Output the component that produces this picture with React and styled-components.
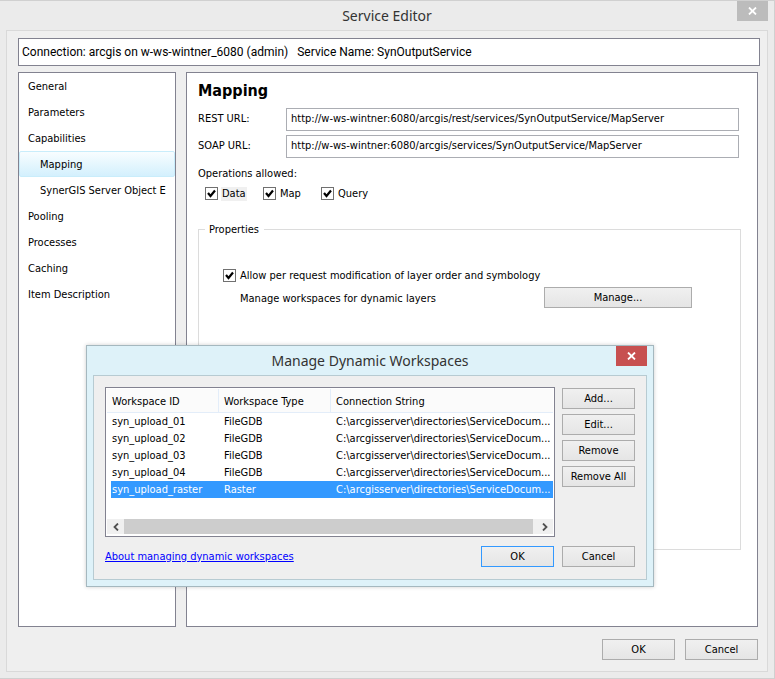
import { useState } from "react";
import styled, { createGlobalStyle, css } from "styled-components";

const GlobalStyle = createGlobalStyle`
  * {
    box-sizing: border-box;
  }

  body {
    margin: 0;
    background-color: #ebebeb;
    color: #000000;
    font-family: "DejaVu Sans Condensed", "DejaVu Sans", sans-serif;
    font-size: 11px;
    line-height: 16px;
  }

  button,
  input {
    font: inherit;
    color: inherit;
  }
`;

const Window = styled.div`
  position: relative;
  display: flex;
  flex-direction: column;
  min-height: 100vh;
  padding: 0 6px;
  border: 1px solid #d0d0d0;
  border-left: 0;
  background-color: #ebebeb;
`;

const TitleBar = styled.header`
  display: flex;
  align-items: center;
  justify-content: center;
  height: 29px;
  color: #333333;
`;

const Title = styled.h1`
  margin: 0;
  font-family: "Noto Sans", "Open Sans", sans-serif;
  font-size: 14px;
  font-weight: 400;
  line-height: 20px;
`;

const CloseButton = styled.button`
  position: absolute;
  top: 0;
  right: 6px;
  display: flex;
  align-items: center;
  justify-content: center;
  width: 31px;
  height: 20px;
  padding: 0;
  border: 0;
  background-color: ${({ $danger }) => ($danger ? "#c75050" : "#bcbcbc")};
`;

const Frame = styled.div`
  flex: 1;
  display: flex;
  flex-direction: column;
  gap: 6px;
  margin-bottom: 6px;
  padding: 7px 9px 11px 11px;
  border: 1px solid #d9d9d9;
  background-color: #efefef;
`;

const ConnectionBar = styled.div`
  display: flex;
  align-items: center;
  gap: 9px;
  height: 28px;
  margin-right: -2px;
  padding: 0 3px;
  border: 1px solid #828290;
  background-color: #ffffff;
  font-family: Roboto, "Noto Sans", sans-serif;
  font-size: 12px;
  white-space: nowrap;
`;

const Columns = styled.div`
  flex: 1;
  display: flex;
  gap: 10px;
`;

const Sidebar = styled.nav`
  width: 158px;
  overflow: hidden;
  border: 1px solid #828290;
  background-color: #ffffff;
`;

const NavItem = styled.a`
  display: block;
  height: 26px;
  padding: 0 9px;
  padding-left: ${({ $nested }) => ($nested ? "20px" : "8px")};
  border: 1px solid transparent;
  border-radius: 2px;
  color: #000000;
  line-height: 26px;
  text-decoration: none;
  white-space: nowrap;

  ${({ $active }) =>
    $active &&
    css`
      border-color: #c9edfb;
      background: linear-gradient(#f8fdff, #d3f0fd);
    `}
`;

const Panel = styled.main`
  flex: 1;
  padding: 8px 16px 75px 11px;
  border: 1px solid #828290;
  background-color: #ffffff;
`;

const Heading = styled.h2`
  margin: 0 0 7px;
  font-size: 16px;
  font-weight: 700;
  line-height: 20px;
`;

const UrlRow = styled.div`
  display: flex;
  align-items: center;
  margin: 0 2px 4px 0;

  label {
    width: 88px;
    padding-bottom: 2px;
  }

  input {
    flex: 1;
    min-width: 0;
    height: 23px;
    padding: 0 4px 2px;
    border: 1px solid #abadb3;
    background-color: #ffffff;
  }
`;

const Operations = styled.div`
  padding-top: 4px;

  p {
    margin: 0 0 3px;
  }
`;

const OperationList = styled.div`
  display: flex;
  padding-left: 7px;

  label {
    min-width: 58px;
  }
`;

const CheckLabel = styled.label`
  display: flex;
  align-items: center;
  gap: 3px;

  .text {
    margin-top: 2px;
    padding: 0 1px;
    line-height: 14px;
  }

  .text.focused {
    background-color: #f0f0f0;
  }
`;

const CheckBox = styled.span`
  display: grid;

  input {
    grid-area: 1 / 1;
    appearance: none;
    width: 13px;
    height: 13px;
    margin: 0;
    border: 1px solid #707070;
    background-color: #ffffff;
  }

  svg {
    grid-area: 1 / 1;
    pointer-events: none;
  }

  input:not(:checked) + svg {
    visibility: hidden;
  }
`;

const Properties = styled.fieldset`
  min-height: 330px;
  margin: 19px 0 0;
  padding: 29px 48px 0 24px;
  border: 1px solid #dcdcdc;

  legend {
    margin-left: -18px;
    padding: 2px 5px 0 4px;
  }
`;

const ManageRow = styled.div`
  display: flex;
  align-items: center;
  justify-content: space-between;
  margin-top: 4px;
  padding-left: 17px;

  span {
    padding-top: 2px;
  }
`;

const Button = styled.button`
  width: ${({ $wide }) => ($wide ? "148px" : "73px")};
  height: 21px;
  padding: 0;
  border: 1px solid ${({ $default }) => ($default ? "#3399ff" : "#acacac")};
  background: linear-gradient(#f0f0f0, #e5e5e5);
  line-height: 19px;
  white-space: nowrap;
`;

const Footer = styled.footer`
  display: flex;
  align-items: center;
  justify-content: flex-end;
  gap: ${({ $tight }) => ($tight ? "8px" : "10px")};
  padding-top: ${({ $tight }) => ($tight ? "3px" : "6px")};

  a {
    margin-right: auto;
    color: #0000ff;
  }
`;

const Dialog = styled.section`
  position: absolute;
  top: 344px;
  left: 86px;
  width: 568px;
  padding: 0 6px 6px;
  border: 1px solid #a5b8bf;
  background-color: #def2f9;
  box-shadow: 0 0 4px rgba(0, 0, 0, 0.2);
`;

const DialogFrame = styled.div`
  display: flex;
  flex-direction: column;
  gap: 6px;
  padding: 11px 11px 12px;
  border: 1px solid #b7cbd2;
  background-color: #efefef;
`;

const DialogBody = styled.div`
  display: flex;
  gap: 7px;
`;

const ButtonStack = styled.div`
  display: flex;
  flex-direction: column;
  gap: 5px;
  padding-top: 1px;
`;

const ListBox = styled.div`
  flex: 1;
  min-width: 0;
  display: flex;
  flex-direction: column;
  justify-content: space-between;
  height: 150px;
  padding: 1px 1px 2px;
  border: 1px solid #828290;
  background-color: #ffffff;
`;

const Table = styled.table`
  width: 100%;
  border-spacing: 0;
  table-layout: fixed;

  th,
  td {
    overflow: hidden;
    padding: 1px 0 0 5px;
    text-align: left;
    white-space: nowrap;
  }

  th {
    height: 24px;
    padding-top: 2px;
    border-right: 1px solid #e3edf9;
    border-bottom: 1px solid #e3edf9;
    background-color: #fbfbfb;
    font-weight: 400;
  }

  th:last-child {
    border-right: 0;
  }

  th:not(:last-child) {
    width: 112px;
  }

  td {
    height: 17px;
    line-height: 16px;
  }

  td:first-child {
    padding-left: 1px;
    border-left: 4px solid #ffffff;
  }
`;

const Row = styled.tr`
  ${({ $selected }) =>
    $selected &&
    css`
      background-color: #3399ff;
      color: #ffffff;
    `}
`;

const ScrollBar = styled.div`
  display: flex;
  height: 15px;
  background-color: #f0f0f0;

  button {
    display: flex;
    align-items: center;
    justify-content: center;
    width: 17px;
    padding: 0;
    border: 0;
    background-color: #f0f0f0;
  }

  .thumb {
    flex: 1;
    margin-right: 3px;
    background-color: #cdcdcd;
  }
`;

const navItems = [
  { label: "General" },
  { label: "Parameters" },
  { label: "Capabilities" },
  { label: "Mapping", nested: true },
  { label: "SynerGIS Server Object E", nested: true },
  { label: "Pooling" },
  { label: "Processes" },
  { label: "Caching" },
  { label: "Item Description" },
];

const connection = "C:\\arcgisserver\\directories\\ServiceDocum...";

const workspaces = [
  { id: "syn_upload_01", type: "FileGDB" },
  { id: "syn_upload_02", type: "FileGDB" },
  { id: "syn_upload_03", type: "FileGDB" },
  { id: "syn_upload_04", type: "FileGDB" },
  { id: "syn_upload_raster", type: "Raster" },
];

const CloseIcon = () => (
  <svg width="9" height="8" viewBox="0 0 9 8" aria-hidden="true">
    <path d="M1 0.5 8 7.5M8 0.5 1 7.5" stroke="#ffffff" strokeWidth="1.8" />
  </svg>
);

const Chevron = ({ right }) => (
  <svg width="6" height="8" viewBox="0 0 6 8" aria-hidden="true">
    <path
      d={right ? "M1 0.5 4.5 4 1 7.5" : "M5 0.5 1.5 4 5 7.5"}
      fill="none"
      stroke="#505050"
      strokeWidth="1.8"
    />
  </svg>
);

const Check = ({ label, focused }) => (
  <CheckLabel>
    <CheckBox>
      <input type="checkbox" defaultChecked />
      <svg width="13" height="13" viewBox="0 0 13 13" aria-hidden="true">
        <path
          d="M3 6 5.5 9 10 3.5"
          fill="none"
          stroke="#000000"
          strokeWidth="2.2"
        />
      </svg>
    </CheckBox>
    <span className={focused ? "text focused" : "text"}>{label}</span>
  </CheckLabel>
);

const ManageDialog = () => {
  const [selected, setSelected] = useState("syn_upload_raster");

  return (
    <Dialog role="dialog" aria-label="Manage Dynamic Workspaces">
      <TitleBar>
        <Title as="h2">Manage Dynamic Workspaces</Title>
        <CloseButton type="button" aria-label="Close" $danger>
          <CloseIcon />
        </CloseButton>
      </TitleBar>
      <DialogFrame>
        <DialogBody>
          <ListBox>
            <Table>
              <thead>
                <tr>
                  <th>Workspace ID</th>
                  <th>Workspace Type</th>
                  <th>Connection String</th>
                </tr>
              </thead>
              <tbody>
                {workspaces.map(({ id, type }) => (
                  <Row
                    key={id}
                    $selected={id === selected}
                    onClick={() => setSelected(id)}
                  >
                    <td>{id}</td>
                    <td>{type}</td>
                    <td>{connection}</td>
                  </Row>
                ))}
              </tbody>
            </Table>
            <ScrollBar>
              <button type="button" aria-label="Scroll left">
                <Chevron />
              </button>
              <div className="thumb" />
              <button type="button" aria-label="Scroll right">
                <Chevron right />
              </button>
            </ScrollBar>
          </ListBox>
          <ButtonStack>
            <Button type="button">Add...</Button>
            <Button type="button">Edit...</Button>
            <Button type="button">Remove</Button>
            <Button type="button">Remove All</Button>
          </ButtonStack>
        </DialogBody>
        <Footer $tight>
          <a href="#about">About managing dynamic workspaces</a>
          <Button type="button" $default>
            OK
          </Button>
          <Button type="button">Cancel</Button>
        </Footer>
      </DialogFrame>
    </Dialog>
  );
};

const App = () => {
  return (
    <Window>
      <GlobalStyle />
      <TitleBar>
        <Title>Service Editor</Title>
        <CloseButton type="button" aria-label="Close">
          <CloseIcon />
        </CloseButton>
      </TitleBar>
      <Frame>
        <ConnectionBar>
          <span>Connection: arcgis on w-ws-wintner_6080 (admin)</span>
          <span>Service Name: SynOutputService</span>
        </ConnectionBar>
        <Columns>
          <Sidebar>
            {navItems.map(({ label, nested }) => (
              <NavItem
                key={label}
                href="#section"
                $nested={nested}
                $active={label === "Mapping"}
              >
                {label}
              </NavItem>
            ))}
          </Sidebar>
          <Panel>
            <Heading>Mapping</Heading>
            <UrlRow>
              <label htmlFor="rest">REST URL:</label>
              <input
                id="rest"
                type="text"
                readOnly
                value="http://w-ws-wintner:6080/arcgis/rest/services/SynOutputService/MapServer"
              />
            </UrlRow>
            <UrlRow>
              <label htmlFor="soap">SOAP URL:</label>
              <input
                id="soap"
                type="text"
                readOnly
                value="http://w-ws-wintner:6080/arcgis/services/SynOutputService/MapServer"
              />
            </UrlRow>
            <Operations>
              <p>Operations allowed:</p>
              <OperationList>
                <Check label="Data" focused />
                <Check label="Map" />
                <Check label="Query" />
              </OperationList>
            </Operations>
            <Properties>
              <legend>Properties</legend>
              <Check label="Allow per request modification of layer order and symbology" />
              <ManageRow>
                <span>Manage workspaces for dynamic layers</span>
                <Button type="button" $wide>
                  Manage...
                </Button>
              </ManageRow>
            </Properties>
          </Panel>
        </Columns>
        <Footer>
          <Button type="button">OK</Button>
          <Button type="button">Cancel</Button>
        </Footer>
      </Frame>
      <ManageDialog />
    </Window>
  );
};

export default App;
